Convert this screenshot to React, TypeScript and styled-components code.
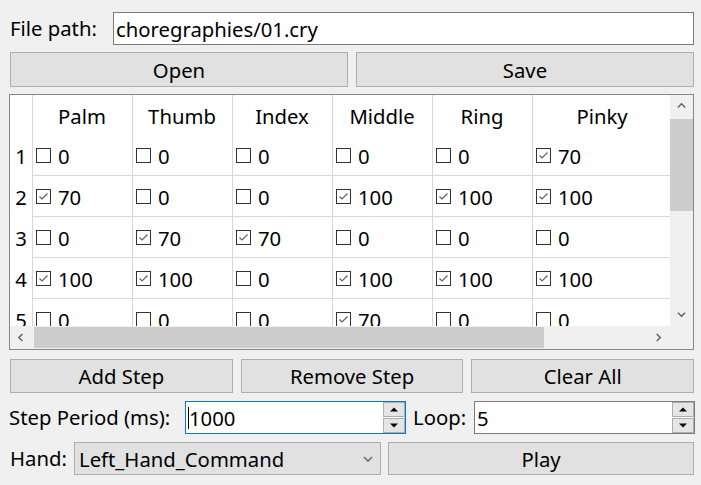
import React from "react";
import styled, { createGlobalStyle } from "styled-components";

const Global = createGlobalStyle`
  html, body { margin: 0; padding: 0; background: #f0f0f0; }
  body { font-family: "Noto Sans", "Open Sans", sans-serif; font-size: 20.3px; color: #000; }
  * { box-sizing: border-box; }
`;

const Window = styled.div`
  width: 701px;
  height: 485px;
  background: #f0f0f0;
  padding: 12px 7px 0 10px;
  display: flex;
  flex-direction: column;
  overflow: hidden;
`;

const Row = styled.div<{ $h: number; $mt?: number; $gap?: number }>`
  display: flex;
  align-items: center;
  height: ${(p) => p.$h}px;
  margin-top: ${(p) => p.$mt ?? 0}px;
  gap: ${(p) => p.$gap ?? 8}px;
  flex: none;
`;

const Label = styled.span<{ $ml?: number; $w?: number }>`
  white-space: nowrap;
  line-height: 1;
  flex: none;
  margin-left: ${(p) => p.$ml ?? 0}px;
  ${(p) => (p.$w ? `width: ${p.$w}px;` : "")}
`;

const LineEdit = styled.div`
  flex: 1;
  height: 100%;
  background: #fff;
  border: 1px solid #7a7a7a;
  display: flex;
  align-items: center;
  padding-left: 2px;
  white-space: nowrap;
`;

const Button = styled.div`
  flex: 1 1 0;
  min-width: 0;
  height: 100%;
  background: #e1e1e1;
  border: 1px solid #adadad;
  display: flex;
  align-items: center;
  justify-content: center;
  white-space: nowrap;
  overflow: hidden;
`;

/* ---------- Table ---------- */
const Frame = styled.div`
  flex: none;
  height: 256px;
  margin: 7px 0 0 -1px;
  border: 1px solid #828790;
  background: #fff;
  display: grid;
  grid-template-columns: 1fr 23px;
  grid-template-rows: 1fr 23px;
  overflow: hidden;
`;

const Viewport = styled.div`
  overflow: hidden;
  background: #fff;
  min-width: 0;
  min-height: 0;
`;

const Grid = styled.div`
  display: grid;
  grid-template-columns: 22px repeat(5, 100px) 140px;
  grid-auto-rows: 41px;
  grid-template-rows: 40px;
  width: 662px;
`;

const Corner = styled.div`
  background: #fff;
`;

const HeadCell = styled.div`
  border-left: 1px solid #d8d8d8;
  display: flex;
  align-items: center;
  justify-content: center;
  padding-top: 1px;
  padding-right: 1px;
`;

const RowHead = styled.div`
  display: flex;
  align-items: center;
  justify-content: center;
  padding-top: 1px;
`;

const Cell = styled.div`
  border-left: 1px solid #d8d8d8;
  border-bottom: 1px solid #d8d8d8;
  display: flex;
  align-items: center;
  padding-left: 3px;
  gap: 7px;
  padding-top: 1px;
`;

const VBar = styled.div`
  background: #f0f0f0;
  display: flex;
  flex-direction: column;
`;

const HBar = styled.div`
  background: #f0f0f0;
  display: flex;
`;

const ArrowBtn = styled.div`
  flex: none;
  width: 23px;
  height: 23px;
  display: flex;
  align-items: center;
  justify-content: center;
`;

const VThumb = styled.div`
  flex: none;
  height: 92px;
  margin: 1px 0 0 0;
  background: #cdcdcd;
`;

const HThumb = styled.div`
  flex: none;
  width: 510px;
  margin: 1px 0 1px 1px;
  background: #cdcdcd;
`;

const Spacer = styled.div`
  flex: 1;
`;

const CornerBox = styled.div`
  background: #f0f0f0;
`;

/* ---------- Spin / combo ---------- */
const Spin = styled.div<{ $w: number; $focus?: boolean }>`
  width: ${(p) => p.$w}px;
  flex: none;
  height: 100%;
  background: #fff;
  border: 1px solid ${(p) => (p.$focus ? "#0078d7" : "#7a7a7a")};
  display: flex;
  align-items: stretch;
`;

const SpinText = styled.div`
  flex: 1;
  display: flex;
  align-items: center;
  padding-left: 2px;
`;

const Caret = styled.span`
  display: inline-block;
  width: 1px;
  height: 22px;
  background: #000;
`;

const SpinButtons = styled.div`
  width: 22px;
  display: flex;
  flex-direction: column;
  gap: 1px;
`;

const SpinBtn = styled.div`
  flex: 1;
  background: #e5e5e5;
  border: 1px solid #adadad;
  display: flex;
  align-items: center;
  justify-content: center;
`;

const Combo = styled.div`
  width: 307px;
  flex: none;
  height: 100%;
  background: #e1e1e1;
  border: 1px solid #adadad;
  display: flex;
  align-items: center;
  padding-left: 4px;
  padding-right: 7px;
`;

const ComboText = styled.span`
  flex: 1;
  white-space: nowrap;
`;

const Chevron = ({ dir, size = 9, color = "#606060" }: { dir: "up" | "down" | "left" | "right"; size?: number; color?: string }) => {
  const pts: Record<string, string> = {
    up: "1,6 5,2 9,6",
    down: "1,3 5,7 9,3",
    left: "6,1 2,5 6,9",
    right: "3,1 7,5 3,9",
  };
  return (
    <svg width={size} height={size} viewBox="0 0 10 10">
      <polyline points={pts[dir]} fill="none" stroke={color} strokeWidth={1.6} />
    </svg>
  );
};

const Tri = ({ up }: { up: boolean }) => (
  <svg width="8" height="5" viewBox="0 0 8 5">
    <polygon points={up ? "0,4.5 4,0.5 8,4.5" : "0,0.5 4,4.5 8,0.5"} fill="#000" />
  </svg>
);

const CheckBox = ({ checked }: { checked: boolean }) => (
  <svg width="15" height="15" viewBox="0 0 15 15" style={{ flex: "none" }}>
    <rect x="0.5" y="0.5" width="14" height="14" fill="#fff" stroke="#333" />
    {checked && <polyline points="3.5,7.5 6,10 11.5,4.5" fill="none" stroke="#606060" strokeWidth="1.2" />}
  </svg>
);

const columns = ["Palm", "Thumb", "Index", "Middle", "Ring", "Pinky"];
const data: [boolean, number][][] = [
  [[false, 0], [false, 0], [false, 0], [false, 0], [false, 0], [true, 70]],
  [[true, 70], [false, 0], [false, 0], [true, 100], [true, 100], [true, 100]],
  [[false, 0], [true, 70], [true, 70], [false, 0], [false, 0], [false, 0]],
  [[true, 100], [true, 100], [false, 0], [true, 100], [true, 100], [true, 100]],
  [[false, 0], [false, 0], [false, 0], [true, 70], [false, 0], [false, 0]],
];

export default function App() {
  return (
    <>
      <Global />
      <Window>
        <Row $h={33} $gap={14}>
          <Label $w={89}>File path:</Label>
          <LineEdit>choregraphies/01.cry</LineEdit>
        </Row>
        <Row $h={35} $mt={7}>
          <Button>Open</Button>
          <Button>Save</Button>
        </Row>
        <Frame>
          <Viewport>
            <Grid>
              <Corner />
              {columns.map((c) => (
                <HeadCell key={c}>{c}</HeadCell>
              ))}
              {data.map((row, i) => (
                <React.Fragment key={i}>
                  <RowHead>{i + 1}</RowHead>
                  {row.map(([chk, v], j) => (
                    <Cell key={j}>
                      <CheckBox checked={chk} />
                      <span>{v}</span>
                    </Cell>
                  ))}
                </React.Fragment>
              ))}
            </Grid>
          </Viewport>
          <VBar>
            <ArrowBtn><Chevron dir="up" /></ArrowBtn>
            <VThumb />
            <Spacer />
            <ArrowBtn><Chevron dir="down" /></ArrowBtn>
          </VBar>
          <HBar>
            <ArrowBtn><Chevron dir="left" /></ArrowBtn>
            <HThumb />
            <Spacer />
            <ArrowBtn><Chevron dir="right" /></ArrowBtn>
          </HBar>
          <CornerBox />
        </Frame>
        <Row $h={34} $mt={9}>
          <Button>Add Step</Button>
          <Button>Remove Step</Button>
          <Button>Clear All</Button>
        </Row>
        <Row $h={33} $mt={8} $gap={7}>
          <Label $ml={-1} $w={169}>Step Period (ms):</Label>
          <Spin $w={221} $focus>
            <SpinText><Caret />1000</SpinText>
            <SpinButtons>
              <SpinBtn><Tri up /></SpinBtn>
              <SpinBtn><Tri up={false} /></SpinBtn>
            </SpinButtons>
          </Spin>
          <Label $w={54}>Loop:</Label>
          <Spin $w={221}>
            <SpinText>5</SpinText>
            <SpinButtons>
              <SpinBtn><Tri up /></SpinBtn>
              <SpinBtn><Tri up={false} /></SpinBtn>
            </SpinButtons>
          </Spin>
        </Row>
        <Row $h={33} $mt={8} $gap={7}>
          <Label $w={57}>Hand:</Label>
          <Combo>
            <ComboText>Left_Hand_Command</ComboText>
            <Chevron dir="down" size={10} color="#707070" />
          </Combo>
          <Button>Play</Button>
        </Row>
      </Window>
    </>
  );
}
